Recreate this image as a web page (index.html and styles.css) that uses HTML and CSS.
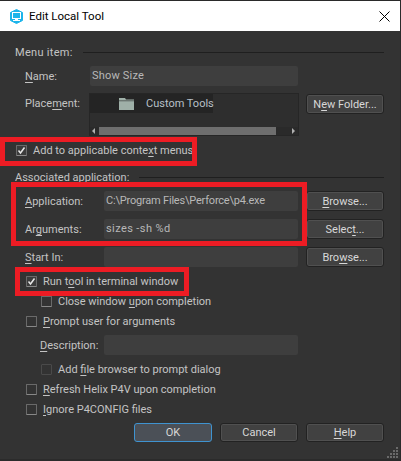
FILE: index.html
```html
<!DOCTYPE html>
<html lang="en">
<head>
  <meta charset="UTF-8">
  <title>Edit Local Tool</title>
  <link rel="stylesheet" href="styles.css">
</head>
<body>
  <div class="dialog">
    <div class="titlebar">
      <svg class="app-icon" width="15" height="15" viewBox="0 0 15 15">
        <path d="M7.500 0.500 13.500 3.500v8L7.500 14.500 1.500 11.500v-8z" fill="#1cb4ea" stroke="#1cb4ea" stroke-linejoin="round"/>
        <rect x="3.500" y="3.500" width="8" height="6" fill="none" stroke="#fff"/>
        <rect x="6" y="10" width="3" height="1" fill="#fff"/>
        <rect x="4" y="11" width="7" height="1" fill="#fff"/>
      </svg>
      <span class="title">Edit Local Tool</span>
      <svg class="close" width="11" height="11" viewBox="0 0 11 11">
        <path d="M0.500 0.500 10.500 10.500M10.500 0.500 0.500 10.500" stroke="#000" fill="none"/>
      </svg>
    </div>

    <div class="content">
      <div class="heading"><span class="heading-wide">Menu item:</span><i class="rule"></i></div>

      <div class="row row-name">
        <label class="lbl-short"><u>N</u>ame:</label>
        <div class="field field-name">Show Size</div>
      </div>

      <div class="row row-place">
        <label class="lbl-short">Place<u>m</u>ent:</label>
        <div class="listbox">
          <div class="list-item">
            <svg class="folder" width="15" height="12" viewBox="0 0 15 12">
              <path d="M0 0h6l1 1.500h8V12H0z" fill="#9fb0a8"/>
              <rect x="0" y="2.500" width="15" height="0.700" fill="#3a3f3d"/>
            </svg>
            <span>Custom Tools</span>
          </div>
          <div class="hscroll">
            <i class="arrow-left"></i>
            <i class="thumb"></i>
            <i class="arrow-right"></i>
          </div>
        </div>
        <button class="btn btn-folder">N<u>e</u>w Folder...</button>
      </div>

      <div class="check check-0 first-check">
        <span class="box on"><svg width="9" height="9" viewBox="0 0 9 9"><path d="M1.500 4.500 3.500 7 7.500 1.500" stroke="#e6e6e6" stroke-width="1.500" fill="none"/></svg></span>
        <span>Add to applicable conte<u>x</u>t menus</span>
      </div>

      <div class="heading heading-2"><span>Associated application:</span><i class="rule"></i></div>

      <div class="row row-app">
        <label class="lbl-long"><u>A</u>pplication:</label>
        <div class="field field-long field-path">C:\Program Files\Perforce\p4.exe</div>
        <button class="btn"><u>B</u>rowse...</button>
      </div>
      <div class="row row-gap">
        <label class="lbl-long">Ar<u>g</u>uments:</label>
        <div class="field field-long field-args">sizes -sh %d</div>
        <button class="btn">Selec<u>t</u>...</button>
      </div>
      <div class="row row-gap">
        <label class="lbl-long"><u>S</u>tart In:</label>
        <div class="field field-long"></div>
        <button class="btn">Bro<u>w</u>se...</button>
      </div>

      <div class="check check-1 run-check">
        <span class="box on"><svg width="9" height="9" viewBox="0 0 9 9"><path d="M1.500 4.500 3.500 7 7.500 1.500" stroke="#e6e6e6" stroke-width="1.500" fill="none"/></svg></span>
        <span>Run t<u>o</u>ol in terminal window</span>
      </div>
      <div class="check check-2 tight">
        <span class="box"></span>
        <span>Close window <u>u</u>pon completion</span>
      </div>
      <div class="check check-1 tight">
        <span class="box"></span>
        <span><u>P</u>rompt user for arguments</span>
      </div>

      <div class="row row-desc">
        <label class="lbl-desc"><u>D</u>escription:</label>
        <div class="field field-long"></div>
      </div>

      <div class="check check-2 desc-after">
        <span class="box off"></span>
        <span>Add <u>f</u>ile browser to prompt dialog</span>
      </div>
      <div class="check check-1 tight">
        <span class="box"></span>
        <span><u>R</u>efresh Helix P4V upon completion</span>
      </div>
      <div class="check check-1 tight">
        <span class="box"></span>
        <span><u>I</u>gnore P4CONFIG files</span>
      </div>

      <div class="actions">
        <button class="btn btn-default">OK</button>
        <button class="btn">Cancel</button>
        <button class="btn"><u>H</u>elp</button>
      </div>
    </div>

    <svg class="grip" width="12" height="12" viewBox="0 0 12 12">
      <path d="M9 0h2v2H9zM6 3h2v2H6zM9 3h2v2H9zM3 6h2v2H3zM6 6h2v2H6zM9 6h2v2H9zM0 9h2v2H0zM3 9h2v2H3zM6 9h2v2H6zM9 9h2v2H9z" fill="#6a6a6a"/>
    </svg>

    <!-- red annotation boxes drawn on top of the screenshot -->
    <div class="mark mark-add"></div>
    <div class="mark mark-app"></div>
    <div class="mark mark-run"></div>
  </div>
</body>
</html>
```

FILE: styles.css
```css
html, body {
  margin: 0;
  padding: 0;
  background: #333333;
}
body {
  font-family: Roboto, "Open Sans", sans-serif;
  font-size: 11px;
  color: #c4c4c4;
}
u {
  text-underline-offset: 2px;
}
.dialog {
  position: relative;
  width: 401px;
  height: 461px;
  overflow: hidden;
  background: #333333;
  box-sizing: border-box;
  border-top: 1px solid #2a2a2a;
  border-bottom: 2px solid #2b2b2b;
  border-right: 1px solid #2b2b2b;
}
.titlebar {
  height: 30px;
  background: #fff;
  display: flex;
  align-items: center;
  padding: 0 10px 0 9px;
  color: #000;
}
.app-icon {
  margin-right: 5px;
}
.title {
  flex: 1;
  font-size: 11.500px;
}
.content {
  padding: 13px 16px 0 15px;
}
.heading {
  display: flex;
  align-items: center;
  height: 16px;
}
.heading-wide {
  letter-spacing: 0.300px;
}
.heading .rule {
  flex: 1;
  height: 1px;
  background: #1f1f1f;
  margin-left: 10px;
}
.heading-2 {
  margin-top: 11px;
}
.row {
  display: flex;
  align-items: flex-start;
}
.row label {
  line-height: 22px;
  height: 20px;
  flex: none;
  white-space: nowrap;
}
.row-name {
  margin-top: 6px;
}
.row-place {
  margin-top: 7px;
}
.row-app {
  margin-top: 6px;
}
.row-gap {
  margin-top: 8px;
}
.row-desc {
  margin-top: 6px;
}
.lbl-short {
  width: 65px;
  padding-left: 10px;
}
.lbl-long {
  width: 79px;
  padding-left: 10px;
}
.lbl-desc {
  width: 64px;
  padding-left: 25px;
}
.field {
  height: 20px;
  line-height: 19px;
  background: #3e3e3e;
  border-radius: 2px;
  padding-left: 2px;
  box-sizing: border-box;
  color: #b8b8b8;
  white-space: nowrap;
}
.field-name {
  width: 208px;
  letter-spacing: 0.200px;
}
.field-long {
  width: 194px;
}
.field-path {
  letter-spacing: -0.200px;
}
.field-args {
  letter-spacing: 0.400px;
}
.listbox {
  width: 210px;
  height: 43px;
  margin-left: -1px;
  box-sizing: border-box;
  border: 1px solid #262626;
  background: #2e2e2e;
  display: flex;
  flex-direction: column;
  justify-content: space-between;
}
.list-item {
  width: 123px;
  height: 19px;
  background: #242424;
  display: flex;
  align-items: center;
  color: #b8c0c8;
  white-space: nowrap;
}
.folder {
  margin: 0 12px 0 29px;
  flex: none;
}
.hscroll {
  height: 8px;
  background: #2a2a2a;
  display: flex;
  align-items: center;
  padding: 0 2px;
}
.hscroll .thumb {
  display: block;
  width: 177px;
  height: 8px;
  background: #6e6e6e;
  margin: 0 16px 0 4px;
}
.arrow-left {
  border-right: 3px solid #b0b0b0;
  border-top: 3px solid transparent;
  border-bottom: 3px solid transparent;
}
.arrow-right {
  border-left: 3px solid #b0b0b0;
  border-top: 3px solid transparent;
  border-bottom: 3px solid transparent;
}
.btn {
  font: inherit;
  width: 78px;
  height: 20px;
  margin-left: 8px;
  padding: 0;
  flex: none;
  color: #d8d8d8;
  background: #414141;
  border: 1px solid #222;
  border-radius: 3px;
  box-shadow: inset 0 0 0 1px #505050;
}
.btn-folder {
  margin-left: 7px;
  margin-top: 1px;
}
.btn-default {
  border-color: #3f93d0;
  box-shadow: none;
  background: #4b5057;
}
.check {
  display: flex;
  align-items: center;
  height: 16px;
  white-space: nowrap;
}
.check-0 {
  padding-left: 1px;
}
.check-1 {
  padding-left: 11px;
}
.check-2 {
  padding-left: 26px;
}
.first-check {
  margin-top: 6px;
}
.run-check {
  margin-top: 6px;
}
.tight {
  margin-top: 4px;
}
.desc-after {
  margin-top: 6px;
}
.box {
  width: 11px;
  height: 11px;
  box-sizing: border-box;
  border: 1px solid #6a6a6a;
  border-bottom-color: #888;
  border-radius: 1px;
  margin-right: 6px;
  display: flex;
  align-items: center;
  justify-content: center;
  flex: none;
}
.box.on {
  background: #3c3c3c;
}
.box.off {
  border-color: #4a4a4a;
}
.actions {
  display: flex;
  justify-content: flex-end;
  margin-top: 6px;
}
.actions .btn {
  height: 19px;
}
.grip {
  position: absolute;
  right: 1px;
  bottom: 0;
}
.mark {
  position: absolute;
  border: 5px solid #ed1c24;
  box-sizing: border-box;
}
.mark-add {
  left: 0;
  top: 136px;
  width: 197px;
  height: 29px;
}
.mark-app {
  left: 11px;
  top: 181px;
  width: 296px;
  height: 64px;
}
.mark-run {
  left: 15px;
  top: 266px;
  width: 174px;
  height: 29px;
}
```
